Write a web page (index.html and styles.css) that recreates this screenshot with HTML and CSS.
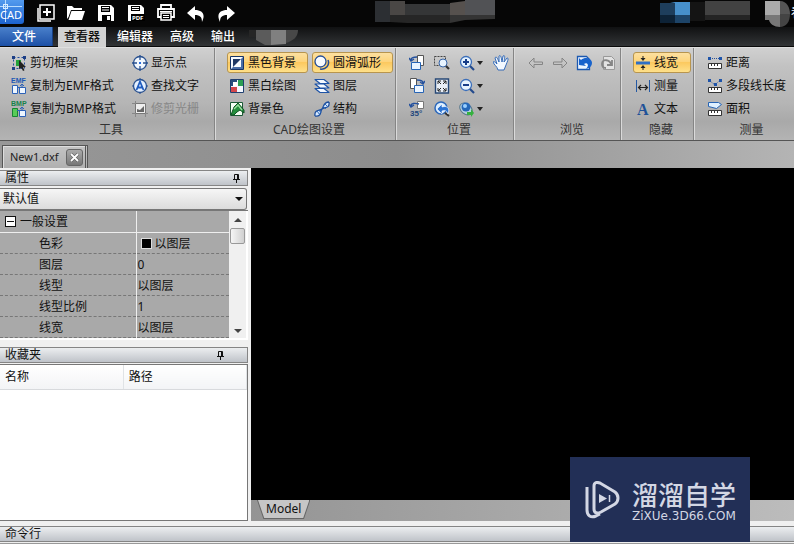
FILE: index.html
```html
<!DOCTYPE html>
<html lang="zh-CN">
<head>
    <meta charset="UTF-8">
    <meta name="viewport" content="width=device-width, initial-scale=1.0">
    <title>New1.dxf - CAD</title>
    <link rel="stylesheet" href="styles.css">
</head>
<body>
    <!-- 标题栏 -->
    <header class="titlebar">
        <svg class="logo" viewBox="0 0 24 24">
            <defs><linearGradient id="lg" x1="0" y1="0" x2="0" y2="1"><stop offset="0" stop-color="#5aa2f2"/><stop offset="1" stop-color="#1b62cf"/></linearGradient></defs>
            <rect x="-3" y="-3" width="27" height="27" rx="3" fill="url(#lg)"/>
            <path d="M0 6.500H22M5.500 0V22" stroke="#b8dcff"/>
            <rect x="3.500" y="4.500" width="4" height="4" fill="none" stroke="#d6ebff"/>
            <text x="0" y="19">CAD</text>
        </svg>
        <nav class="quick">
            <button title="新建"><svg viewBox="0 0 18 18"><path d="M3 1h14v14H3z" fill="none" stroke="#fff" stroke-width="1.500"/><path d="M1 4v13h13" fill="none" stroke="#fff" stroke-width="1.500"/><path d="M10 4v8M6 8h8" stroke="#fff" stroke-width="2"/></svg></button>
            <button title="打开"><svg viewBox="0 0 18 18"><path d="M0 15V2h5l2 2h8v2H4L1.500 13zM4.500 7H18l-3 9H1.500z" fill="#fff"/></svg></button>
            <button title="保存"><svg viewBox="0 0 18 18"><path d="M1 1h13l3 3v13H1z" fill="#fff"/><path d="M4 2h9v6H4zM5 11h9v6H5z" fill="#000"/><path d="M5 3.500h7M5 6h7" stroke="#fff" stroke-width="1.200"/><path d="M10 12h3v4h-3z" fill="#fff"/></svg></button>
            <button title="另存为PDF"><svg viewBox="0 0 18 18"><path d="M1 1h13l3 3v13H1z" fill="#fff"/><path d="M4 2h9v5H4zM4 10h14v7H4z" fill="#000"/><path d="M5 3.500h7M5 5.500h7" stroke="#fff"/><text x="5" y="16" class="pdf">PDF</text></svg></button>
            <button title="打印"><svg viewBox="0 0 18 18"><path d="M4 5V1h10v4M4 13H1V5h16v8h-3" fill="none" stroke="#fff" stroke-width="1.800"/><path d="M4 9h10v7H4z" fill="#000" stroke="#fff" stroke-width="1.500"/><path d="M3 7.500h12M6 11.500h6M6 13.500h6" stroke="#fff"/></svg></button>
            <button title="撤销"><svg viewBox="0 0 18 18"><path d="M0 9l8-7v4c7 0 11 4 7 12 0-5-2-7-7-7v5z" fill="#fff"/></svg></button>
            <button title="重做"><svg viewBox="0 0 18 18"><path d="M18 9l-8-7v4C3 6-1 10 3 18c0-5 2-7 7-7v5z" fill="#fff"/></svg></button>
        </nav>
        <svg class="mosaic-title" viewBox="0 0 120 24">
            <path fill="#2c2f33" d="M0 1h15v21H0z"/><path fill="#4a4745" d="M15 1h15v14H15z"/><path fill="#262626" d="M15 15h60v8H32l-17-1z"/>
            <path fill="#353637" d="M30 4h45v11H30z"/><path fill="#56514e" d="M75 3l15-2v14H75z"/><path fill="#515255" d="M90 0h30v15H90z"/><path fill="#343434" d="M75 15h45v4l-30 1-15 3z"/>
        </svg>
        <svg class="mosaic-user" viewBox="0 0 90 24">
            <path fill="#1e3e5c" d="M0 3h15v12H0z"/><path fill="#4790cb" d="M10 2h20v13H15V3z"/><path fill="#0d2236" d="M0 15h15v8H0z"/><path fill="#1d4468" d="M15 15h15v8H15z"/>
            <path fill="#141414" d="M30 2h15v19H30z"/><path fill="#424242" d="M45 1h45v14H45z"/><path fill="#242424" d="M45 15h45v5H45z"/>
        </svg>
        <svg class="mosaic-avatar" viewBox="0 0 26 28">
            <path fill="#aaa" d="M0 1h15v14H0z"/><path fill="#555" d="M15 1c7 0 10 7 10 13H15z"/><path fill="#777" d="M0 15h15v12C9 27 5 24 4 20H0z"/><path fill="#444" d="M15 14h10c0 8-4 13-10 13z"/>
        </svg>
        <span class="user">看</span>
    </header>

    <nav class="tabs">
        <a href="#" class="file">文件</a>
        <a href="#" class="tab active">查看器</a>
        <a href="#" class="tab">编辑器</a>
        <a href="#" class="tab">高级</a>
        <a href="#" class="tab">输出</a>
        <svg class="mosaic-tab" viewBox="0 0 50 17">
            <path fill="#262626" d="M0 1h7v7H0z"/><path fill="#5b5b5b" d="M7 1h15v15h-6L7 11z"/><path fill="#808080" d="M22 1h15v14l-15 1z"/><path fill="#484848" d="M37 1h12c0 7-5 11-12 13z"/>
        </svg>
    </nav>

    <!-- 功能区 -->
    <section class="ribbon">
        <div class="group tools">
            <div class="cols">
                <div class="col">
                    <button class="cmd"><svg viewBox="0 0 16 16"><path d="M2.500 2.500h11v11h-11z" fill="none" stroke="#234d9e" stroke-dasharray="2 2"/><path d="M1 1h3v3H1zM12 1h3v3h-3zM1 12h3v3H1z" fill="#1d3f86"/><path d="M5 5h5v6H5z" fill="#23a33a"/><path d="M8 5l7 7-3 .3 1.500 3-1.500.7-1.500-3L8 14z" fill="#222"/></svg>剪切框架</button>
                    <button class="cmd"><svg viewBox="0 0 16 16"><text x="0" y="5" class="tiny">EMF</text><path d="M1.500 7.500h5v8h-5zM8.500 9.500h6v6h-6z" fill="#eef6ff" stroke="#2d62b8"/><path d="M6 9.500h5V7M9 8l2-2 2 2" fill="none" stroke="#2d62b8"/></svg>复制为EMF格式</button>
                    <button class="cmd"><svg viewBox="0 0 16 16"><text x="0" y="5" class="tiny green">BMP</text><path d="M1.500 7.500h5v8h-5z" fill="#57cc58" stroke="#178433"/><path d="M8.500 9.500h6v6h-6z" fill="#eef6ff" stroke="#2d62b8"/><path d="M6 9.500h5V7M9 8l2-2 2 2" fill="none" stroke="#2d62b8"/></svg>复制为BMP格式</button>
                </div>
                <div class="col">
                    <button class="cmd"><svg viewBox="0 0 16 16"><circle cx="8" cy="8" r="6.500" fill="#f2f8ff" stroke="#28508f" stroke-width="1.300"/><path d="M8 0v5M8 11v5M0 8h5M11 8h5" stroke="#28508f" stroke-width="1.300"/><path d="M7 7h2v2H7z" fill="#2a6de0"/></svg>显示点</button>
                    <button class="cmd"><svg viewBox="0 0 16 16"><circle cx="8" cy="8" r="6.500" fill="#e4f0ff" stroke="#28508f" stroke-width="1.300"/><path d="M8 0v2M8 14v2M0 8h2M14 8h2" stroke="#28508f"/><path d="M4.500 12L8 3.500l3.500 8.500M6 9.500h4" fill="none" stroke="#1f5cc0" stroke-width="1.800"/></svg>查找文字</button>
                    <button class="cmd" disabled><svg viewBox="0 0 16 16"><path d="M3.500 2.500h10v10h-10z" fill="#eee" stroke="#777"/><path d="M3.500 0v3M0 2.500h3M13.500 13v3M14 12.500h2M3.500 13v3M0 12.500h3" stroke="#888"/><path d="M5 11V8l3 1 4-4v6z" fill="#666"/></svg>修剪光栅</button>
                </div>
            </div>
            <h2>工具</h2>
        </div>

        <div class="group drawing">
            <div class="cols">
                <div class="col">
                    <button class="cmd on"><svg viewBox="0 0 16 16"><path d="M1.500 1.500h13v13h-13z" fill="#f8fbff" stroke="#173467"/><path d="M14 2v12H2z" fill="#4a6da6"/><path d="M4 4h8v8H4z" fill="#203864"/><path d="M12 4v8H4z" fill="#f8fbff"/></svg>黑色背景</button>
                    <button class="cmd"><svg viewBox="0 0 16 16"><path d="M1.500 1.500h13v13h-13z" fill="#f5f8ff" stroke="#204070"/><path d="M2 2h6v6H2z" fill="#264d7c"/><path d="M9 2h5v6H9z" fill="#2b9e54"/><path d="M2 9h6v5H2z" fill="#d2474c"/><path d="M4 4h4v4H4z" fill="#fff"/></svg>黑白绘图</button>
                    <button class="cmd"><svg viewBox="0 0 16 16"><path d="M1.500 1.500h12v13h-12z" fill="#f5fff5" stroke="#1d5a37"/><path d="M2 14l3-8 4-4 6 7v3l-4-3-3 2-3 3z" fill="#238e3c" stroke="#115324"/><path d="M5 8l4-4 4 5" fill="none" stroke="#9be0a0" stroke-width="1.300"/></svg>背景色</button>
                </div>
                <div class="col">
                    <button class="cmd on"><svg viewBox="0 0 16 16"><circle cx="6.500" cy="6.500" r="5.500" fill="#f7fbff" stroke="#244d96" stroke-width="1.300"/><path d="M14 5c2 5-2 10-8 9" fill="none" stroke="#244d96" stroke-width="1.500"/></svg>圆滑弧形</button>
                    <button class="cmd"><svg viewBox="0 0 16 16"><path d="M1 10.500h9l5 4H6zM1 6h9l5 4H6zM1 1.500h9l5 4H6z" fill="#f4f9ff" stroke="#1d53a6" stroke-width="1.200" stroke-linejoin="round"/></svg>图层</button>
                    <button class="cmd"><svg viewBox="0 0 16 16"><path d="M1 15C0 8 6 10 8 8s1-7 7-7M1 15c7 1 5-5 7-7s8 0 7-7" fill="#d8eaff" stroke="#1d4f9e" stroke-width="1.300"/><path d="M3 10l3 4M5 9l2 3M9 5l3 3M11 3l3 3" stroke="#2c68bb"/></svg>结构</button>
                </div>
            </div>
            <h2>CAD绘图设置</h2>
        </div>

        <div class="group position">
            <div class="cols">
                <div class="col">
                    <button class="icon" title="向左旋转"><svg viewBox="0 0 16 16"><path d="M8.500.500h6v10h-6z" fill="#fff" stroke="#555"/><path d="M2.500 7.500h9v7h-9z" fill="#eaf4ff" stroke="#2764b5"/><path d="M2 5c0-3 3-3 6-3M0 3l2 3 3-2" fill="none" stroke="#24519e" stroke-width="1.400"/></svg></button>
                    <button class="icon" title="向右旋转"><svg viewBox="0 0 16 16"><path d="M1.500.500h6v10h-6z" fill="#fff" stroke="#555"/><path d="M5.500 7.500h9v7h-9z" fill="#eaf4ff" stroke="#2764b5"/><path d="M14 5c0-3-3-3-6-3M11 4l3 2 2-3" fill="none" stroke="#24519e" stroke-width="1.400"/></svg></button>
                    <button class="icon" title="旋转角度"><svg viewBox="0 0 16 16"><path d="M8.500.500h6v7h-6z" fill="#fff" stroke="#777"/><path d="M2 5c0-3 4-3 8-2M0 3l2 3 3-2" fill="none" stroke="#24519e" stroke-width="1.400"/><text x="1" y="15" class="deg">35°</text></svg></button>
                </div>
                <div class="col">
                    <button class="icon" title="窗口缩放"><svg viewBox="0 0 16 16"><path d="M.500 1.500h11v9H.500z" fill="none" stroke="#444" stroke-dasharray="2 1"/><circle cx="9" cy="8" r="4" fill="#e8f4ff" stroke="#3765a8"/><path d="M12 11l3 3" stroke="#333" stroke-width="2.200"/></svg></button>
                    <button class="icon" title="适合窗口"><svg viewBox="0 0 16 16"><path d="M1.500 1h13v14h-13z" fill="#e8eef6" stroke="#274876" stroke-width="1.400"/><path d="M4 6V3h3M9 3h3v3M12 10v3H9M7 13H4v-3M4 3l3 3M12 3L9 6M4 13l3-3M12 13l-3-3" fill="none" stroke="#222"/></svg></button>
                    <button class="icon" title="上一视图"><svg viewBox="0 0 16 16"><circle cx="7" cy="7" r="6" fill="#dceeff" stroke="#2c68bb" stroke-width="1.500"/><path d="M11 12l4 3" stroke="#333" stroke-width="2"/><path d="M3 8l5-5v3c6-2 8 2 6 7-2-4-3-4-6-3v3z" fill="#2c74d4" stroke="#fff" stroke-width=".6"/></svg></button>
                </div>
                <div class="col zoom">
                    <button class="icon drop" title="放大"><svg viewBox="0 0 16 16"><circle cx="7" cy="7" r="5.500" fill="#e5f3ff" stroke="#3c6fba" stroke-width="1.300"/><path d="M4 7h6M7 4v6" stroke="#173d88" stroke-width="2"/><path d="M11 11l4 4" stroke="#234a8c" stroke-width="2.200"/></svg></button>
                    <button class="icon drop" title="缩小"><svg viewBox="0 0 16 16"><circle cx="7" cy="7" r="5.500" fill="#e5f3ff" stroke="#3c6fba" stroke-width="1.300"/><path d="M4 7h6" stroke="#173d88" stroke-width="2"/><path d="M11 11l4 4" stroke="#234a8c" stroke-width="2.200"/></svg></button>
                    <button class="icon drop" title="动态观察"><svg viewBox="0 0 16 16"><ellipse cx="7" cy="8" rx="7" ry="5" transform="rotate(40 7 8)" fill="#b7cfdf" stroke="#58778b"/><circle cx="7" cy="6" r="4.500" fill="#2568b9"/><circle cx="6" cy="5" r="2" fill="#9bd0ff"/><path d="M8 11h4V8l3 4-3 4v-2H8z" fill="#35b13f"/></svg></button>
                </div>
                <div class="col">
                    <button class="icon" title="平移"><svg viewBox="0 0 16 16"><path d="M5 15C4 11 1 10 0 7c1-1 2 0 4 2L2 3c1-2 2-1 4 4L6 1c1-1 2-1 3 6l1-6c2-1 2 0 1 6l3-4c2 0 1 2-1 7l-2 5z" fill="#f2f8ff" stroke="#356bb8"/></svg></button>
                </div>
            </div>
            <h2>位置</h2>
        </div>

        <div class="group browse">
            <div class="cols">
                <button class="icon" title="后退" disabled><svg viewBox="0 0 16 16"><path d="M1 8l5-5v4h8.500v2.500H6V13z" fill="#c4c4c4" stroke="#858585"/></svg></button>
                <button class="icon" title="前进" disabled><svg viewBox="0 0 16 16"><path d="M15 8l-5-5v4H1.500v2.500H10V13z" fill="#c4c4c4" stroke="#858585"/></svg></button>
                <button class="icon" title="上一页"><svg viewBox="0 0 16 16"><path d="M1.500 1.500h9l3 3v10h-12z" fill="#eef6ff" stroke="#1b58b0" stroke-width="1.300"/><path d="M3 10V3l2 2c5-4 11-1 11 3 0 3-2 5-6 6 4-4 1-7-2-5l2 2z" fill="#1863cc"/></svg></button>
                <button class="icon" title="下一页" disabled><svg viewBox="0 0 16 16"><path d="M3.500 1.500h8l3 3v10h-11z" fill="#e2e2e2" stroke="#999"/><path d="M12 5v5H7M11 9c-1-4-9-6-9 0 0 2 1 4 4 4" fill="none" stroke="#858585" stroke-width="1.800"/></svg></button>
            </div>
            <h2>浏览</h2>
        </div>

        <div class="group hide">
            <div class="cols">
                <div class="col">
                    <button class="cmd on"><svg viewBox="0 0 16 16"><path d="M1 8h14" stroke="#2f6fc4" stroke-width="3"/><path d="M8 1v2M8 13v2" stroke="#222"/><path d="M5.500 3h5L8 6zM5.500 13h5L8 10z" fill="#222"/></svg>线宽</button>
                    <button class="cmd"><svg viewBox="0 0 16 16"><path d="M1.500 2v12M14.500 2v12" stroke="#2459a4"/><path d="M3 9.500h10M6 7L3.500 9.500 6 12M10 7l2.500 2.500L10 12" fill="none" stroke="#222" stroke-width="1.200"/></svg>测量</button>
                    <button class="cmd"><svg viewBox="0 0 16 16"><text x="2" y="14" class="serif-a">A</text></svg>文本</button>
                </div>
            </div>
            <h2>隐藏</h2>
        </div>

        <div class="group measure">
            <div class="cols">
                <div class="col">
                    <button class="cmd"><svg viewBox="0 0 16 16"><path d="M3 3.500h10" stroke="#28519a" stroke-dasharray="1 1"/><path d="M1 2h3v3H1zM12 2h3v3h-3z" fill="#1e54a9"/><path d="M1.500 8.500h13v5h-13z" fill="#fff" stroke="#333"/><path d="M4.500 9v2M7.500 9v2M10.500 9v2" stroke="#333"/></svg>距离</button>
                    <button class="cmd"><svg viewBox="0 0 16 16"><path d="M3 3l5 4 5-5" fill="none" stroke="#28519a" stroke-dasharray="1 1"/><path d="M1 1h3v3H1zM7 5h3v3H7zM12 1h3v3h-3z" fill="#1e54a9"/><path d="M1.500 9.500h13v5h-13z" fill="#fff" stroke="#333"/><path d="M4.500 10v2M7.500 10v2M10.500 10v2" stroke="#333"/></svg>多段线长度</button>
                    <button class="cmd"><svg viewBox="0 0 16 16"><path d="M1.500 1.500h10l3 2-5 4-8-2z" fill="#dff0ff" stroke="#2764b4"/><path d="M1.500 9.500h13v5h-13z" fill="#fff" stroke="#333"/><path d="M4.500 10v2M7.500 10v2M10.500 10v2" stroke="#333"/></svg>面积</button>
                </div>
            </div>
            <h2>测量</h2>
        </div>
    </section>

    <!-- 文档标签 -->
    <div class="doc-tabs">
        <div class="doc-tab">
            <span>New1.dxf</span>
            <button class="close" title="关闭"><svg viewBox="0 0 9 9"><path d="M1 1l7 7M8 1L1 8" stroke="#555" stroke-width="3"/><path d="M1 1l7 7M8 1L1 8" stroke="#fff" stroke-width="1.800"/></svg></button>
        </div>
    </div>

    <main class="workspace">
        <aside class="side">
            <h3 class="panel-title">属性<svg class="pin" viewBox="0 0 9 9"><path d="M2.500 5V.500h4V5M1 5.500h7M4.500 6v3M5.500 1v4" fill="none" stroke="#111"/></svg></h3>
            <div class="preset"><select aria-label="默认值"><option>默认值</option></select></div>
            <div class="props">
                <table>
                    <tr class="section"><th><i class="minus"></i>一般设置</th><td></td></tr>
                    <tr><th>色彩</th><td><i class="swatch"></i>以图层</td></tr>
                    <tr><th>图层</th><td>0</td></tr>
                    <tr><th>线型</th><td>以图层</td></tr>
                    <tr><th>线型比例</th><td>1</td></tr>
                    <tr><th>线宽</th><td>以图层</td></tr>
                </table>
                <div class="scroll">
                    <i class="up"></i>
                    <i class="thumb"></i>
                    <i class="down"></i>
                </div>
            </div>
            <h3 class="panel-title fav">收藏夹<svg class="pin" viewBox="0 0 9 9"><path d="M2.500 5V.500h4V5M1 5.500h7M4.500 6v3M5.500 1v4" fill="none" stroke="#111"/></svg></h3>
            <div class="fav-list">
                <table>
                    <tr><th>名称</th><th>路径</th></tr>
                </table>
            </div>
        </aside>
        <section class="view">
            <div class="canvas"></div>
            <div class="sheets">
                <button class="sheet"><span>Model</span></button>
            </div>
        </section>
    </main>

    <!-- 命令行 -->
    <footer class="command">
        <label class="panel-title" for="cmdLine">命令行</label>
        <input id="cmdLine" type="text">
    </footer>

    <div class="watermark">
        <svg viewBox="0 0 36 38">
            <path d="M9 5c0-4 3-4 6-3l15 9c4 3 4 9 0 12l-14 8c-4 2-7 1-7-3z" fill="none" stroke="#d3d7e4" stroke-width="3"/>
            <path d="M2 6v23c0 6 4 8 9 6l4-2" fill="none" stroke="#d3d7e4" stroke-width="3"/>
            <path d="M14 13l8 4.500-8 4.500z" fill="#d3d7e4"/><path d="M24.500 14v7" stroke="#d3d7e4" stroke-width="1.500"/>
        </svg>
        <div>
            <strong>溜溜自学</strong>
            <small>ZiXUe.3D66.COM</small>
        </div>
    </div>
</body>
</html>
```
FILE: styles.css
```css
* {
    box-sizing: border-box;
}

body {
    margin: 0;
    height: 100vh;
    display: flex;
    flex-direction: column;
    overflow: hidden;
    position: relative;
    background: #f0f0f0;
    color: #111;
    font: 12px/20px "Noto Sans", "Noto Sans CJK SC", sans-serif;
}

button,
input,
select {
    font: inherit;
    color: inherit;
    margin: 0;
    padding: 0;
    border: 0;
    background: none;
}

h2,
h3 {
    margin: 0;
    font-size: 12px;
    font-weight: normal;
}

svg {
    display: block;
    flex: none;
}

/* 标题栏 */
.titlebar {
    display: flex;
    height: 27px;
    flex: none;
    background: #060606;
    overflow: hidden;
}

.logo {
    width: 24px;
    height: 24px;
}

.logo text {
    font-size: 11px;
    fill: #fff;
}

.quick {
    display: flex;
    gap: 12px;
    padding: 4px 0 0 13px;
}

.quick button,
.quick svg {
    width: 18px;
    height: 18px;
}

.pdf {
    font-size: 6px;
    font-weight: bold;
    fill: #fff;
}

.mosaic-title {
    width: 120px;
    height: 24px;
    margin-left: 140px;
}

.mosaic-user {
    width: 90px;
    height: 24px;
    margin: 0 15px 0 auto;
}

.mosaic-avatar {
    width: 26px;
    height: 28px;
}

.user {
    width: 3px;
    margin-top: 3px;
    color: #fff;
    overflow: hidden;
}

/* 菜单标签 */
.tabs {
    display: flex;
    height: 20px;
    flex: none;
    background: linear-gradient(#101112, #323436);
    border-bottom: 1px solid #0a0a0a;
}

.tabs a {
    color: #fff;
    text-decoration: none;
    line-height: 20px;
    font-weight: 500;
}

.tabs .file {
    width: 53px;
    margin-right: 5px;
    text-align: center;
    padding-right: 4px;
    background: linear-gradient(#4a80cb, #1c50a6);
    border-right: 1px solid #163f83;
}

.tabs .tab {
    padding: 0 6px;
    margin-right: 5px;
}

.tabs .active {
    height: 20px;
    color: #111;
    background: #d2d2d2;
}

.mosaic-tab {
    width: 50px;
    height: 17px;
    margin: 2px 0 0 3px;
}

/* 功能区 */
.ribbon {
    display: flex;
    flex: none;
    height: 94px;
    overflow: hidden;
    background: linear-gradient(#d0d0d0, #c2c2c2 20%, #b5b5b5 60%, #a9a9a9 80%, #b4b4b4);
    border-top: 1px solid #dedede;
    border-bottom: 1px solid #555;
}

.group {
    display: flex;
    flex-direction: column;
    flex: none;
    padding-top: 4px;
    border-right: 1px solid #858585;
    box-shadow: 1px 0 #dadada;
}

.group h2 {
    text-align: center;
    color: #333;
}

.cols {
    display: flex;
    height: 71px;
    align-items: flex-start;
}

.col {
    display: flex;
    flex-direction: column;
    gap: 2px;
}

.cmd {
    display: flex;
    align-items: center;
    height: 21px;
    gap: 3px;
    padding: 0 2px;
    border: 1px solid transparent;
    border-radius: 3px;
    white-space: nowrap;
}

.cmd svg,
.icon svg {
    width: 16px;
    height: 16px;
}

.cmd:disabled {
    color: #888;
}

.cmd.on {
    background: linear-gradient(#fde0a0, #fdd47c 45%, #fcc95f 50%, #fee08a);
    border-color: #b8954e;
}

.icon {
    display: flex;
    align-items: center;
    width: 16px;
    height: 21px;
}

.drop {
    width: 25px;
    gap: 2px;
}

.drop::after {
    content: "";
    border: 3px solid transparent;
    border-top: 4px solid #222;
    border-bottom: 0;
}

.tiny {
    font: bold 7px/7px "Liberation Sans", sans-serif;
    fill: #1c58b4;
}

.tiny.green {
    fill: #16824a;
}

.deg {
    font: bold 8px/8px "Liberation Sans", sans-serif;
    fill: #21457c;
}

.serif-a {
    font: bold 16px/16px "Liberation Serif", serif;
    fill: #1f5298;
}

.tools {
    width: 215px;
    padding-left: 8px;
}

.tools .cols {
    gap: 10px;
}

.drawing {
    width: 181px;
    padding-left: 12px;
}

.drawing .cols {
    gap: 4px;
}

.drawing .cmd {
    width: 81px;
    padding: 0 1px;
}

.drawing h2,
.position h2,
.browse h2 {
    padding-right: 4px;
}

.position {
    width: 118px;
    padding-left: 13px;
}

.position .cols {
    gap: 9px;
}

.browse {
    width: 107px;
    padding-left: 14px;
}

.browse .cols {
    gap: 8px;
}

.hide {
    width: 73px;
    padding-left: 12px;
}

.hide .cmd {
    width: 58px;
    padding: 0 1px;
}

.hide h2 {
    padding-right: 4px;
}

.measure {
    width: 114px;
    padding-left: 10px;
}

.measure h2 {
    padding-right: 8px;
}

/* 文档标签 */
.doc-tabs {
    flex: none;
    height: 27px;
    padding: 4px 2px 0;
    background: linear-gradient(90deg, #979797, #8d8d8d 50%, #b4b4b4);
}

.doc-tab {
    display: flex;
    align-items: center;
    width: 86px;
    height: 23px;
    padding-left: 7px;
    gap: 7px;
    color: #222;
    background: linear-gradient(#c4c4c4, #b0b0b0);
    border: 1px solid #555;
    border-bottom: 0;
    border-right: 3px double #555;
    box-shadow: inset 1px 1px #ddd;
    font-size: 11px;
}

.close {
    display: flex;
    align-items: center;
    justify-content: center;
    width: 17px;
    height: 17px;
    background: linear-gradient(#aaa, #777);
    border: 1px solid #666;
    border-radius: 3px;
}

.close svg {
    width: 9px;
    height: 9px;
}

/* 工作区 */
.workspace {
    display: flex;
    flex: 1;
    min-height: 0;
    gap: 3px;
}

.side {
    display: flex;
    flex-direction: column;
    width: 248px;
    padding-top: 2px;
    flex: none;
}

.panel-title {
    display: flex;
    align-items: center;
    justify-content: space-between;
    flex: none;
    height: 16px;
    padding: 0 6px 0 5px;
    line-height: 14px;
    background: linear-gradient(#eceef0, #bfc3c9);
    border: 1px solid #858585;
    border-left: 0;
}

.pin {
    width: 9px;
    height: 9px;
}

.fav {
    margin-top: 7px;
    padding-right: 22px;
}

.preset {
    position: relative;
    margin: 2px 1px 0 0;
}

.preset::after {
    content: "";
    position: absolute;
    right: 4px;
    top: 9px;
    border: 4px solid transparent;
    border-top-color: #111;
    border-bottom: 0;
}

.preset select {
    appearance: none;
    display: block;
    width: 100%;
    height: 22px;
    padding-left: 3px;
    background: linear-gradient(#f6f6f6, #dcdcdc);
    border: 1px solid #777;
    border-left: 0;
    border-radius: 0 3px 3px 0;
}

.props {
    display: flex;
    height: 130px;
    border-top: 1px solid #777;
    border-bottom: 2px solid #fff;
    background: #a9a9a9;
}

.props table {
    flex: 1;
    border-collapse: collapse;
    table-layout: fixed;
}

.props tr {
    height: 21px;
}

.props th,
.props td {
    padding: 2px 0 0;
    line-height: 18px;
    font-weight: normal;
    text-align: left;
    border-bottom: 1px dashed #777;
}

.props th {
    width: 136px;
    padding-left: 39px;
    border-right: 1px solid #eee;
}

.props td {
    padding-left: 1px;
}

.props .section th {
    padding-left: 5px;
}

.props .section th,
.props .section td {
    border-bottom: 1px solid #eee;
}

.minus {
    display: inline-block;
    width: 11px;
    height: 11px;
    margin-right: 4px;
    vertical-align: -1px;
    border: 1px solid #111;
    background: linear-gradient(#111, #111) center / 7px 1px no-repeat #fff;
}

.swatch {
    display: inline-block;
    width: 11px;
    height: 11px;
    margin: 0 3px 0 3px;
    vertical-align: -1px;
    background: #000;
    border: 1px solid #ddd;
}

.scroll {
    display: flex;
    flex-direction: column;
    align-items: center;
    width: 19px;
    padding: 7px 0 5px;
    background: #f0f0f0;
    border-right: 2px solid #fff;
}

.up,
.down {
    border: 4px solid transparent;
}

.up {
    border-top: 0;
    border-bottom-color: #444;
}

.down {
    margin-top: auto;
    border-bottom: 0;
    border-top-color: #444;
}

.thumb {
    width: 15px;
    height: 16px;
    margin-top: 6px;
    background: linear-gradient(90deg, #f5f5f5, #d0d0d0);
    border: 1px solid #999;
    border-radius: 2px;
}

.fav-list {
    flex: 1;
    margin-top: 1px;
    background: #fff;
    border: 1px solid #777;
    border-left: 0;
}

.fav-list table {
    width: 100%;
    border-collapse: collapse;
    table-layout: fixed;
}

.fav-list th {
    height: 24px;
    padding: 0 5px;
    font-weight: normal;
    text-align: left;
    background: linear-gradient(#fff, #f3f4f6);
    border-bottom: 1px solid #d8dadd;
    border-right: 1px solid #e0e3e6;
}

.view {
    display: flex;
    flex-direction: column;
    flex: 1;
}

.canvas {
    flex: 1;
    background: #000;
}

.sheets {
    height: 21px;
    padding-left: 6px;
    background: linear-gradient(90deg, #949494, #bcbcbc);
}

.sheet {
    display: block;
    height: 19px;
    padding: 0 1px 1px;
    background: #666;
    clip-path: polygon(0 0, 100% 0, 88% 100%, 12% 100%);
}

.sheet span {
    display: block;
    padding: 0 8px;
    height: 18px;
    line-height: 17px;
    background: #c6c6c6;
    clip-path: polygon(0 0, 100% 0, 88% 100%, 12% 100%);
}

/* 命令行 */
.command {
    flex: none;
    height: 30px;
    margin-top: 5px;
    background: #fff;
}

.command .panel-title {
    border-right: 0;
    box-shadow: 0 1px #eee, 0 2px #999;
}

.command input {
    display: block;
    width: 100%;
    height: 12px;
    margin-top: 2px;
    background: #fff;
}

/* 水印 */
.watermark {
    position: absolute;
    right: 44px;
    bottom: 14px;
    display: flex;
    align-items: center;
    gap: 11px;
    width: 180px;
    height: 85px;
    padding-left: 15px;
    background: #222f56;
    color: #d3d7e4;
}

.watermark svg {
    width: 36px;
    height: 38px;
}

.watermark strong,
.watermark small {
    display: block;
    white-space: nowrap;
}

.watermark strong {
    font: 500 26px/32px "Noto Sans CJK SC", sans-serif;
}

.watermark small {
    font: 12px/12px "DejaVu Sans", sans-serif;
}
```
